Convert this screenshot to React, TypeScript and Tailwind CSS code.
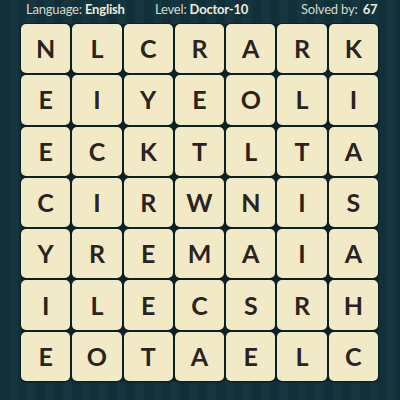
const rows = [
  'NLCRARK',
  'EIYEOLI',
  'ECKTLTA',
  'CIRWNIS',
  'YREMAIA',
  'ILECSRH',
  'EOTAELC',
]

function Tile({ letter }: { letter: string }) {
  return (
    <div className="flex items-center justify-center h-[49.3px] rounded-[5px] bg-[#f2eac6] shadow-[0_0_0_1px_#0b2128,0_1px_2px_rgba(0,0,0,0.6)]">
      <span className="text-[25px] font-bold leading-none text-[#2a231f]">{letter}</span>
    </div>
  )
}

export default function App() {
  return (
    <div
      className="w-[400px] h-[400px] overflow-hidden bg-[repeating-linear-gradient(90deg,#11303a_0px,#11303a_9px,#15363f_9px,#15363f_18px)]"
      style={{ fontFamily: 'Lato, "Noto Sans", sans-serif' }}
    >
      {/* Header */}
      <div className="flex items-center h-[24px] pb-[4px] pl-[26px] text-[13px] tracking-[-0.2px] text-[#d9d8c9]">
        <span className="w-[129px]">
          Language: <span className="font-bold text-[#ecebdd]">English</span>
        </span>
        <span className="w-[146px]">
          Level: <span className="font-bold text-[#ecebdd]">Doctor-10</span>
        </span>
        <span>
          Solved by: <span className="ml-[2px] font-bold text-[#ecebdd]">67</span>
        </span>
      </div>

      {/* Board */}
      <div className="ml-[21px] w-[357px] grid grid-cols-7 gap-[2px] bg-[#0c242c] rounded-[6px]">
        {rows.map((row, r) =>
          row.split('').map((ch, c) => <Tile key={`${r}-${c}`} letter={ch} />)
        )}
      </div>
    </div>
  )
}
